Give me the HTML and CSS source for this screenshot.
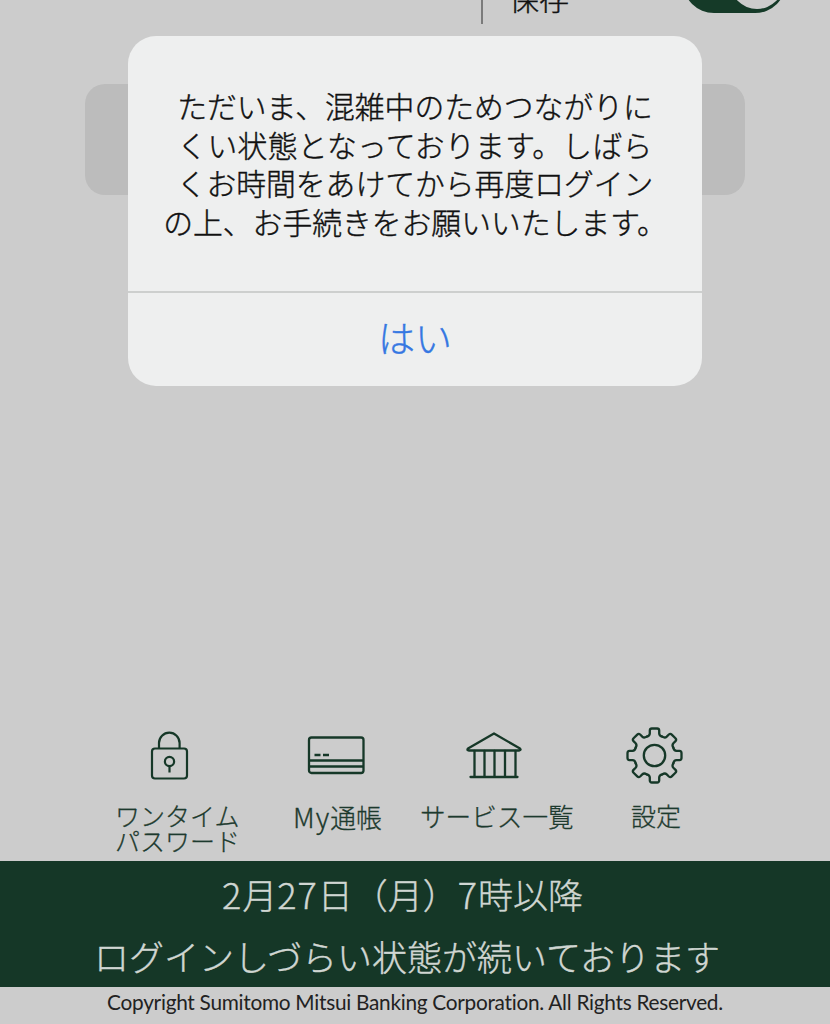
FILE: index.html
```html
<!DOCTYPE html>
<html lang="ja">
<head>
<meta charset="utf-8">
<title>ログイン</title>
<link rel="stylesheet" href="styles.css">
</head>
<body>
<div class="screen">
  <header class="save-row">
    <span class="divider"></span>
    <span class="save-label">保存</span>
    <span class="switch"><span class="knob"></span></span>
  </header>
  <div class="login-button"></div>
  <nav class="menu">
    <a class="item otp">
      <svg class="icon" viewBox="0 0 60 60" fill="none" stroke="#163828" stroke-width="2.200">
        <rect x="13" y="22.500" width="35" height="30" rx="3"/>
        <path d="M20 22.500v-5.500a10.300 10.300 0 0 1 20.600 0V22.500M30.500 40.500v6"/>
        <circle cx="30.500" cy="35.500" r="4.600"/>
      </svg>
      <span class="label">ワンタイム<br>パスワード</span>
    </a>
    <a class="item passbook">
      <svg class="icon" viewBox="0 0 60 60" fill="none" stroke="#163828" stroke-width="2.300">
        <rect x="3" y="11.500" width="54.500" height="35.500" rx="2.500"/>
        <path d="M3 34.500h54.500M3 40.500h54.500M8.500 29h6M17 29h6"/>
      </svg>
      <span class="label"><span class="latin">My</span>通帳</span>
    </a>
    <a class="item services">
      <svg class="icon" viewBox="0 0 60 60" fill="none" stroke="#163828" stroke-width="2.300" stroke-linejoin="round" stroke-linecap="round">
        <path d="M30 7.500 4 22.500Q2.500 24.500 5 24.500h50q2.500-.500 1-2ZM6.500 51h47"/>
        <path d="M10.500 25v25.500M20.500 25v25.500M30.500 25v25.500M41 25v25.500M51.500 25v25.500"/>
      </svg>
      <span class="label">サービス一覧</span>
    </a>
    <a class="item settings">
      <svg class="icon" viewBox="0 0 60 60" fill="none" stroke="#163828" stroke-width="2.300" stroke-linecap="round">
        <defs><path id="tooth" d="M-7.800-18.850Q-4.800-19.500-4.700-22V-25Q-4.600-27-2.600-27H2.600Q4.600-27 4.700-25V-22Q4.800-19.500 7.800-18.850"/></defs>
        <g transform="translate(30.500 29.500)">
          <use href="#tooth"/>
          <use href="#tooth" transform="rotate(45)"/>
          <use href="#tooth" transform="rotate(90)"/>
          <use href="#tooth" transform="rotate(135)"/>
          <use href="#tooth" transform="rotate(180)"/>
          <use href="#tooth" transform="rotate(225)"/>
          <use href="#tooth" transform="rotate(270)"/>
          <use href="#tooth" transform="rotate(315)"/>
          <circle r="10.700"/>
        </g>
      </svg>
      <span class="label">設定</span>
    </a>
  </nav>
  <section class="banner">
    <p class="when"><span class="digit">2</span>月<span class="digit">27</span>日（月）<span class="digit">7</span>時以降</p>
    <p class="notice">ログインしづらい状態が続いております</p>
  </section>
  <footer class="copyright"><span>Copyright Sumitomo Mitsui Banking Corporation. All Rights Reserved.</span></footer>
  <div class="dialog" role="alertdialog">
    <p class="message">ただいま、混雑中のためつながりに<br><span class="second-line">くい状態となっております。しばら</span><br>くお時間をあけてから再度ログイン<br>の上、お手続きをお願いいたします。</p>
    <button class="confirm">はい</button>
  </div>
</div>
</body>
</html>
```
FILE: styles.css
```css
* { box-sizing: border-box; }
body {
  margin: 0;
  background: #cccccc;
  color: #111;
  font-family: "Noto Sans CJK JP", sans-serif;
  font-weight: 300;
  text-spacing-trim: space-all;
  -webkit-text-stroke: 0.4px currentColor;
}
p { margin: 0; }
.screen {
  position: relative;
  display: flex;
  flex-direction: column;
  width: 830px;
  height: 1024px;
  overflow: hidden;
}
.save-row {
  display: flex;
  height: 84px;
  padding-left: 481px;
}
.divider { width: 2px; height: 24px; background: #7b7b7b; }
.save-label {
  width: 201px;
  margin: -22px 0 0 26px;
  font-size: 30px;
  line-height: 38px;
}
.switch {
  display: flex;
  justify-content: flex-end;
  width: 103px;
  height: 62px;
  margin: -49px 0 0 -27px;
  padding: 4px 2px;
  border-radius: 31px;
  background: #153a28;
}
.knob { width: 54px; height: 54px; border-radius: 50%; background: #ccc; }
.login-button {
  width: 660px;
  height: 111px;
  margin-left: 85px;
  border-radius: 20px;
  background: #bcbcbc;
}
.menu {
  display: grid;
  grid-template-columns: 161px 162px 154px 167px;
  height: 666px;
  padding: 531px 0 0 97px;
}
.item { display: flex; flex-direction: column; color: #1d3a2e; }
.icon { width: 60px; height: 60px; }
.label {
  margin-top: 17px;
  font-size: 25px;
  line-height: 25px;
  white-space: nowrap;
  -webkit-text-stroke-width: 0.3px;
}
.latin { font-size: 27.5px; line-height: 1; letter-spacing: 1px; }
.otp .icon { margin-left: 42px; }
.otp .label { margin-left: 18px; }
.passbook .icon { margin-left: 48px; }
.passbook .label { height: 25px; margin-left: 35px; font-size: 25.8px; }
.services .icon { margin-left: 44px; }
.services .label { margin-left: 0; font-size: 25.6px; }
.settings .icon { margin-left: 50px; }
.settings .label { margin-left: 57px; }
.banner {
  height: 126px;
  padding-top: 1px;
  background: #153727;
  color: #d0d6d2;
  font-size: 35px;
  line-height: 62px;
  text-align: center;
  white-space: nowrap;
}
.when { padding-right: 25px; }
.digit { font-size: 36px; letter-spacing: 1px; }
.notice { padding-right: 16px; }
.copyright {
  height: 37px;
  color: #222;
  font-family: Lato, sans-serif;
  font-size: 20.8px;
  font-weight: 400;
  font-variant-ligatures: none;
  letter-spacing: -0.27px;
  line-height: 30px;
  text-align: center;
  -webkit-text-stroke-width: 0;
}
.dialog {
  position: absolute;
  top: 36px;
  left: 128px;
  display: flex;
  flex-direction: column;
  width: 574px;
  height: 350px;
  border-radius: 28px;
  background: #eeefef;
}
.message {
  height: 255px;
  padding-top: 50px;
  font-size: 29.8px;
  line-height: 38.7px;
  text-align: center;
  white-space: nowrap;
}
.second-line { letter-spacing: 0.3px; }
.confirm {
  flex: 1;
  padding: 0 0 6px;
  border: 0;
  border-top: 2px solid #cdcfce;
  border-radius: 0 0 28px 28px;
  background: none;
  color: #3577e2;
  font: 300 37px "Noto Sans CJK JP", sans-serif;
}
```
